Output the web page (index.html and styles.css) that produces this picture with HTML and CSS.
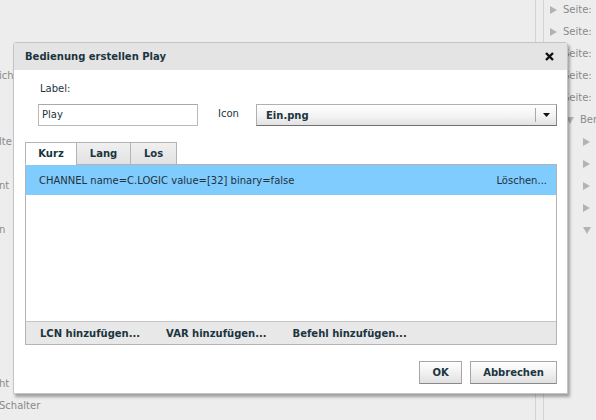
FILE: index.html
```html
<!DOCTYPE html>
<html lang="de">
<head>
<meta charset="utf-8">
<title>Bedienung erstellen Play</title>
<link rel="stylesheet" href="styles.css">
</head>
<body>
<div class="page">
  <div class="left-pane">
    <ul class="rows">
      <li></li><li></li><li></li>
      <li>ich</li>
      <li></li><li></li>
      <li>lte</li>
      <li></li>
      <li>nt</li>
      <li></li>
      <li>n</li>
      <li></li><li></li><li></li><li></li><li></li><li></li>
      <li>ht</li>
      <li>Schalter</li>
    </ul>
  </div>
  <div class="splitter"></div>
  <div class="right-pane">
    <ul class="rows tree">
      <li class="lvl0"><svg class="tri" width="7" height="8" viewBox="0 0 7 8"><path d="M0 0L7 4L0 8Z"/></svg>Seite:</li>
      <li class="lvl0"><svg class="tri" width="7" height="8" viewBox="0 0 7 8"><path d="M0 0L7 4L0 8Z"/></svg>Seite:</li>
      <li class="lvl0"><svg class="tri" width="7" height="8" viewBox="0 0 7 8"><path d="M0 0L7 4L0 8Z"/></svg>Seite:</li>
      <li class="lvl0"><svg class="tri" width="7" height="8" viewBox="0 0 7 8"><path d="M0 0L7 4L0 8Z"/></svg>Seite:</li>
      <li class="lvl0"><svg class="tri" width="7" height="8" viewBox="0 0 7 8"><path d="M0 0L7 4L0 8Z"/></svg>Seite:</li>
      <li class="lvl1"><svg class="tri" width="8" height="7" viewBox="0 0 8 7"><path d="M0 0H8L4 7Z"/></svg>Ber</li>
      <li class="lvl2"><svg class="tri" width="7" height="8" viewBox="0 0 7 8"><path d="M0 0L7 4L0 8Z"/></svg></li>
      <li class="lvl2"><svg class="tri" width="7" height="8" viewBox="0 0 7 8"><path d="M0 0L7 4L0 8Z"/></svg></li>
      <li class="lvl2"><svg class="tri" width="7" height="8" viewBox="0 0 7 8"><path d="M0 0L7 4L0 8Z"/></svg></li>
      <li class="lvl2"><svg class="tri" width="7" height="8" viewBox="0 0 7 8"><path d="M0 0L7 4L0 8Z"/></svg></li>
      <li class="lvl2"><svg class="tri" width="8" height="7" viewBox="0 0 8 7"><path d="M0 0H8L4 7Z"/></svg></li>
    </ul>
  </div>

  <div class="dialog">
    <div class="dlg-title">
      <span class="dlg-title-text">Bedienung erstellen Play</span>
      <svg class="close" width="9" height="9" viewBox="0 0 9 9"><path d="M1 1L8 8M8 1L1 8"/></svg>
    </div>
    <div class="dlg-body">
      <div class="field-label">Label:</div>
      <div class="field-row">
        <div class="text-input">Play</div>
        <span class="icon-label">Icon</span>
        <div class="select">
          <span class="select-value">Ein.png</span>
          <span class="select-btn"><svg width="7" height="4" viewBox="0 0 7 4"><path d="M0 0H7L3.5 4Z"/></svg></span>
        </div>
      </div>
      <div class="tabs">
        <div class="tab tab-kurz active">Kurz</div>
        <div class="tab tab-lang">Lang</div>
        <div class="tab tab-los">Los</div>
      </div>
      <div class="tab-panel">
        <div class="cmd-list">
          <div class="cmd-row selected">
            <span>CHANNEL name=C.LOGIC value=[32] binary=false</span>
            <span>Löschen...</span>
          </div>
        </div>
        <div class="cmd-bar">
          <span>LCN hinzufügen...</span>
          <span>VAR hinzufügen...</span>
          <span>Befehl hinzufügen...</span>
        </div>
      </div>
      <div class="dlg-buttons">
        <div class="btn btn-ok">OK</div>
        <div class="btn btn-cancel">Abbrechen</div>
      </div>
    </div>
  </div>
</div>
</body>
</html>
```

FILE: styles.css
```css
* { box-sizing: border-box; }

html, body {
  margin: 0;
  padding: 0;
}

body {
  background: #ededed;
  font-family: "DejaVu Sans", Verdana, sans-serif;
  font-size: 10px;
  color: #22353f;
}

.page {
  position: relative;
  display: flex;
  width: 596px;
  height: 420px;
  overflow: hidden;
}

.rows {
  list-style: none;
  margin: -1px 0 0 0;
  padding: 0;
}

.rows li {
  height: 22px;
  line-height: 22px;
  white-space: nowrap;
  color: #8a8a8a;
}

.left-pane {
  width: 536px;
  flex: none;
  border-right: 1px solid #d3d3d3;
  overflow: hidden;
}

.left-pane .rows {
  margin-left: -1px;
}

.splitter {
  width: 7px;
  flex: none;
}

.right-pane {
  flex: 1;
  border-left: 1px solid #d3d3d3;
  overflow: hidden;
}

.tree li {
  display: flex;
  align-items: center;
}

.tree .tri {
  fill: #b3b3b3;
  flex: none;
  margin-right: 6px;
}

.tree .lvl0 { padding-left: 6px; }
.tree .lvl1 { padding-left: 22px; }
.tree .lvl2 { padding-left: 39px; }

/* Dialog (modal overlay) */
.dialog {
  position: absolute;
  left: 13px;
  top: 42px;
  width: 555px;
  height: 352px;
  background: #fff;
  border: 1px solid #c4c4c4;
  border-radius: 3px 3px 0 0;
  box-shadow: 2px 3px 3px rgba(0, 0, 0, 0.32);
}

.dlg-title {
  height: 27px;
  background: #e4e4e4;
  display: flex;
  align-items: center;
  justify-content: space-between;
  padding: 0 13px 0 11px;
}

.dlg-title-text {
  font-weight: bold;
  color: #1b3440;
}

.close {
  stroke: #111;
  stroke-width: 2.4;
}

.dlg-body {
  padding: 0 10px 0 11px;
}

.field-label {
  margin-top: 12px;
  line-height: 14px;
  padding-left: 15px;
}

.field-row {
  margin-top: 8px;
  display: flex;
  align-items: center;
  height: 22px;
}

.text-input {
  margin-left: 13px;
  width: 160px;
  height: 22px;
  border: 1px solid #b9b9b9;
  border-top-color: #a9a9a9;
  padding-left: 3px;
  line-height: 20px;
}

.icon-label {
  margin-left: 20px;
  width: 38px;
  padding-bottom: 4px;
}

.select {
  flex: 1;
  height: 22px;
  display: flex;
  align-items: center;
  border: 1px solid #b0b0b0;
  border-right-color: #8a8a8a;
  border-bottom-color: #707070;
  background: linear-gradient(#ffffff, #f3f3f3 55%, #e2e2e2);
}

.select-value {
  flex: 1;
  padding-left: 9px;
  font-weight: bold;
  color: #1b3440;
}

.select-btn {
  width: 21px;
  height: 14px;
  border-left: 1px solid #a8a8a8;
  display: flex;
  align-items: center;
  justify-content: center;
  fill: #111;
}

.tabs {
  margin-top: 16px;
  display: flex;
  position: relative;
  z-index: 1;
  margin-bottom: -1px;
}

.tab {
  height: 23px;
  border: 1px solid #b4b4b4;
  margin-right: -1px;
  display: flex;
  align-items: center;
  justify-content: center;
  font-weight: bold;
  color: #1b3440;
  background: linear-gradient(#f0f0f0, #e2e2e2);
}

.tab.active {
  background: #fff;
  border-bottom-color: #fff;
}

.tab-kurz { width: 52px; }
.tab-lang { width: 55px; }
.tab-los { width: 47px; }

.tab-panel {
  height: 181px;
  border: 1px solid #b4b4b4;
  display: flex;
  flex-direction: column;
}

.cmd-list {
  height: 156px;
}

.cmd-row {
  height: 30px;
  display: flex;
  align-items: center;
  justify-content: space-between;
  padding: 0 9px 0 13px;
}

.cmd-row.selected {
  background: #80ccfe;
  color: #22323b;
}

.cmd-bar {
  height: 23px;
  border-top: 1px solid #c6c6c6;
  background: #e8e8e8;
  display: flex;
  align-items: center;
  gap: 26px;
  padding-left: 14px;
  font-weight: bold;
  color: #1b3440;
}

.dlg-buttons {
  margin-top: 16px;
  display: flex;
  justify-content: flex-end;
  gap: 8px;
}

.btn {
  height: 23px;
  border: 1px solid #a6a6a6;
  border-bottom-color: #8a8a8a;
  background: linear-gradient(#ffffff, #f1f1f1 50%, #e0e0e0);
  display: flex;
  align-items: center;
  justify-content: center;
  font-weight: bold;
  color: #1b3440;
}

.btn-ok { width: 43px; }
.btn-cancel { width: 87px; }
```
